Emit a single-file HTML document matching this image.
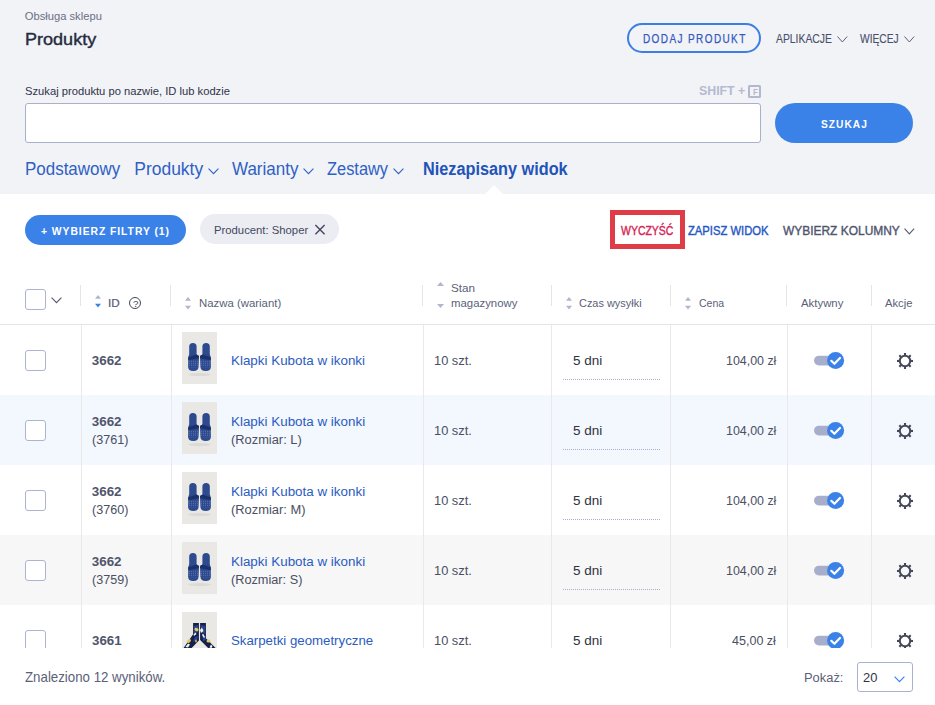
<!DOCTYPE html>
<html><head><meta charset="utf-8"><style>
html,body{margin:0;padding:0;}
body{width:935px;height:705px;overflow:hidden;position:relative;background:#fff;font-family:"Liberation Sans",sans-serif;}
.a{position:absolute;box-sizing:content-box;}
.t{position:absolute;white-space:nowrap;line-height:1;transform-origin:0 0;}
svg.a{overflow:visible}
</style></head><body>
<div class="a" style="left:0;top:0;width:935px;height:194px;background:#f1f3f7"></div>
<div class="a" style="left:485px;top:185px;width:0;height:0;border-left:9px solid transparent;border-right:9px solid transparent;border-bottom:9px solid #fff"></div>
<div class="t" style="left:24.76px;top:11.43px;font-size:11.19px;color:#6b6f85;">Obsługa sklepu</div>
<div class="t" style="left:24.66px;top:31.26px;font-size:17.30px;color:#262b3d;transform:scaleX(1.0443);-webkit-text-stroke:0.4px currentColor;">Produkty</div>
<div class="a" style="left:627px;top:23px;width:130px;height:26px;border:2px solid #3b7ee4;border-radius:15px"></div>
<div class="t" style="left:642.50px;top:33.91px;font-size:11.92px;color:#3358c0;letter-spacing:1.669px;transform:scaleX(0.8390);-webkit-text-stroke:0.25px currentColor;">DODAJ PRODUKT</div>
<div class="t" style="left:775.97px;top:33.91px;font-size:11.92px;color:#4a4f6a;transform:scaleX(0.8720);-webkit-text-stroke:0.12px currentColor;">APLIKACJE</div>
<svg class="a" style="left:837.30px;top:35.50px" width="10.70" height="6.50" viewBox="0 0 10.70 6.50"><polyline points="0.50,0.50 5.35,6.00 10.20,0.50" fill="none" stroke="#5a5f78" stroke-width="1.0"/></svg>
<div class="t" style="left:859.59px;top:33.91px;font-size:11.92px;color:#4a4f6a;transform:scaleX(0.8594);-webkit-text-stroke:0.12px currentColor;">WIĘCEJ</div>
<svg class="a" style="left:904.00px;top:35.50px" width="10.70" height="6.50" viewBox="0 0 10.70 6.50"><polyline points="0.50,0.50 5.35,6.00 10.20,0.50" fill="none" stroke="#5a5f78" stroke-width="1.0"/></svg>
<div class="t" style="left:24.53px;top:86.00px;font-size:11.34px;color:#30344a;transform:scaleX(0.9892);">Szukaj produktu po nazwie, ID lub kodzie</div>
<div class="t" style="left:698.81px;top:84.43px;font-size:13.08px;color:#b5bacf;font-weight:700;transform:scaleX(0.9431);">SHIFT +</div>
<div class="a" style="left:747.9px;top:85px;width:9.4px;height:8.7px;border:2px solid #b3b8cf;border-radius:1.5px"></div>
<div class="t" style="left:753.26px;top:88.51px;font-size:8.14px;color:#b3b8cf;font-weight:700;transform:scaleX(0.9877);">F</div>
<div class="a" style="left:25px;top:103px;width:734px;height:38px;border:1px solid #a9b0cc;border-radius:3px;background:#fff"></div>
<div class="a" style="left:775px;top:103px;width:138px;height:40px;border-radius:20px;background:#3b82e8"></div>
<div class="t" style="left:820.50px;top:119.20px;font-size:11.34px;color:#ffffff;font-weight:700;letter-spacing:1.134px;transform:scaleX(0.9001);">SZUKAJ</div>
<div class="t" style="left:24.53px;top:161.14px;font-size:17.44px;color:#2f60c4;transform:scaleX(0.9725);">Podstawowy</div>
<div class="t" style="left:134.30px;top:161.14px;font-size:17.44px;color:#2f60c4;">Produkty</div>
<svg class="a" style="left:208.00px;top:167.80px" width="11.00" height="6.20" viewBox="0 0 11.00 6.20"><polyline points="0.55,0.55 5.50,5.65 10.45,0.55" fill="none" stroke="#2f60c4" stroke-width="1.1"/></svg>
<div class="t" style="left:231.72px;top:161.14px;font-size:17.44px;color:#2f60c4;transform:scaleX(0.9751);">Warianty</div>
<svg class="a" style="left:303.00px;top:167.80px" width="11.00" height="6.20" viewBox="0 0 11.00 6.20"><polyline points="0.55,0.55 5.50,5.65 10.45,0.55" fill="none" stroke="#2f60c4" stroke-width="1.1"/></svg>
<div class="t" style="left:326.51px;top:161.14px;font-size:17.44px;color:#2f60c4;transform:scaleX(0.9400);">Zestawy</div>
<svg class="a" style="left:393.00px;top:167.80px" width="11.00" height="6.20" viewBox="0 0 11.00 6.20"><polyline points="0.55,0.55 5.50,5.65 10.45,0.55" fill="none" stroke="#2f60c4" stroke-width="1.1"/></svg>
<div class="t" style="left:422.68px;top:161.14px;font-size:17.44px;color:#2353b8;font-weight:700;transform:scaleX(0.9328);">Niezapisany widok</div>
<div class="a" style="left:25px;top:215px;width:161px;height:30px;border-radius:15px;background:#3b82e8"></div>
<div class="t" style="left:40.74px;top:226.18px;font-size:11.48px;color:#ffffff;font-weight:700;letter-spacing:1.033px;transform:scaleX(0.9047);">+ WYBIERZ FILTRY (1)</div>
<div class="a" style="left:200px;top:214px;width:139px;height:30px;border-radius:15px;background:#ebedf3"></div>
<div class="t" style="left:213.52px;top:225.33px;font-size:11.19px;color:#43485e;transform:scaleX(1.0094);">Producent: Shoper</div>
<svg class="a" style="left:314px;top:224px" width="12" height="11" viewBox="0 0 12 11"><path d="M1.4 1L10.6 10.2M10.6 1L1.4 10.2" stroke="#43485e" stroke-width="1.4"/></svg>
<div class="a" style="left:610px;top:210px;width:65px;height:29px;border:5px solid #de3d47"></div>
<div class="t" style="left:620.68px;top:224.95px;font-size:12.94px;color:#d42453;-webkit-text-stroke:0.4px currentColor;transform:scaleX(0.8104);">WYCZYŚĆ</div>
<div class="t" style="left:687.50px;top:223.73px;font-size:13.08px;color:#2357c4;-webkit-text-stroke:0.4px currentColor;transform:scaleX(0.8600);">ZAPISZ WIDOK</div>
<div class="t" style="left:782.55px;top:223.73px;font-size:13.08px;color:#505570;-webkit-text-stroke:0.4px currentColor;transform:scaleX(0.9134);">WYBIERZ KOLUMNY</div>
<svg class="a" style="left:904.00px;top:227.60px" width="10.70" height="6.40" viewBox="0 0 10.70 6.40"><polyline points="0.55,0.55 5.35,5.85 10.15,0.55" fill="none" stroke="#565b73" stroke-width="1.1"/></svg>
<div class="a" style="left:25px;top:289px;width:19px;height:19px;border:1px solid #adb4cf;border-radius:3px;background:#fff"></div>
<svg class="a" style="left:51.00px;top:296.50px" width="11.00" height="6.30" viewBox="0 0 11.00 6.30"><polyline points="0.57,0.57 5.50,5.73 10.43,0.57" fill="none" stroke="#565b73" stroke-width="1.15"/></svg>
<div class="a" style="left:80px;top:285px;width:1px;height:21px;background:#e4e5e9"></div>
<div class="a" style="left:170px;top:285px;width:1px;height:21px;background:#e4e5e9"></div>
<div class="a" style="left:422px;top:285px;width:1px;height:21px;background:#e4e5e9"></div>
<div class="a" style="left:551px;top:285px;width:1px;height:21px;background:#e4e5e9"></div>
<div class="a" style="left:670px;top:285px;width:1px;height:21px;background:#e4e5e9"></div>
<div class="a" style="left:786px;top:285px;width:1px;height:21px;background:#e4e5e9"></div>
<div class="a" style="left:871px;top:285px;width:1px;height:21px;background:#e4e5e9"></div>
<svg class="a" style="left:95px;top:295.1px" width="6" height="13" viewBox="0 0 6 13"><path d="M0 3.7L3 0L6 3.7Z" fill="#b0b6cf"/><path d="M0 8.8L3 12.6L6 8.8Z" fill="#3b82e8"/></svg>
<div class="t" style="left:108.00px;top:298.20px;font-size:11.34px;color:#585d76;transform:scaleX(1.0341);-webkit-text-stroke:0.2px currentColor;">ID</div>
<div class="a" style="left:129.1px;top:296.7px;width:10.4px;height:10.4px;border:1.4px solid #444859;border-radius:50%"></div>
<div class="t" style="left:133.02px;top:300.13px;font-size:9.30px;color:#444859;transform:scaleX(1.0526);">?</div>
<svg class="a" style="left:185px;top:297.2px" width="6" height="13" viewBox="0 0 6 13"><path d="M0 3.7L3 0L6 3.7Z" fill="#b0b6cf"/><path d="M0 8.8L3 12.6L6 8.8Z" fill="#b0b6cf"/></svg>
<div class="t" style="left:198.55px;top:298.20px;font-size:11.34px;color:#5a5f7a;transform:scaleX(1.0041);">Nazwa (wariant)</div>
<svg class="a" style="left:436.5px;top:282px" width="7" height="4" viewBox="0 0 7 4"><path d="M0 4L3.5 0L7 4Z" fill="#b0b6cf"/></svg>
<svg class="a" style="left:436.5px;top:304px" width="7" height="4" viewBox="0 0 7 4"><path d="M0 0L3.5 4L7 0Z" fill="#b0b6cf"/></svg>
<div class="t" style="left:450.65px;top:282.16px;font-size:11.63px;color:#5a5f7a;transform:scaleX(1.0063);">Stan</div>
<div class="t" style="left:450.69px;top:298.20px;font-size:11.34px;color:#5a5f7a;transform:scaleX(1.0043);">magazynowy</div>
<svg class="a" style="left:566px;top:297.2px" width="6" height="13" viewBox="0 0 6 13"><path d="M0 3.7L3 0L6 3.7Z" fill="#b0b6cf"/><path d="M0 8.8L3 12.6L6 8.8Z" fill="#b0b6cf"/></svg>
<div class="t" style="left:579.12px;top:298.20px;font-size:11.34px;color:#5a5f7a;transform:scaleX(0.9654);">Czas wysyłki</div>
<svg class="a" style="left:685px;top:297.2px" width="6" height="13" viewBox="0 0 6 13"><path d="M0 3.7L3 0L6 3.7Z" fill="#b0b6cf"/><path d="M0 8.8L3 12.6L6 8.8Z" fill="#b0b6cf"/></svg>
<div class="t" style="left:698.60px;top:298.20px;font-size:11.34px;color:#5a5f7a;transform:scaleX(0.9311);">Cena</div>
<div class="t" style="left:800.60px;top:298.20px;font-size:11.34px;color:#5a5f7a;transform:scaleX(1.0053);">Aktywny</div>
<div class="t" style="left:884.53px;top:298.20px;font-size:11.34px;color:#5a5f7a;transform:scaleX(0.9886);">Akcje</div>
<div class="a" style="left:0;top:324px;width:935px;height:1px;background:#e4e5e9"></div>
<div class="a" id="tbody" style="left:0;top:325px;width:935px;height:323px;overflow:hidden">
<div class="a" style="left:0;top:0px;width:935px;height:70px;background:#ffffff"></div>
<div class="a" style="left:25px;top:25px;width:19px;height:19px;border:1px solid #adb4cf;border-radius:3px;background:#fff"></div>
<div class="t" style="left:91.78px;top:28.68px;font-size:13.37px;color:#50556b;font-weight:700;">3662</div>
<svg class="a" style="left:182px;top:7px" width="35" height="52" viewBox="0 0 35 52"><rect width="35" height="52" fill="#eae8e5"/><ellipse cx="17.5" cy="42.6" rx="11.5" ry="1.6" fill="#dcdad7"/><path d="M7.2 14.6 Q7.2 10.9 10.9 10.9 Q14.6 10.9 14.6 14.6 L14.6 22.6 L17 24 L16.6 34.8 Q16.4 39 11.3 39 Q6.1 39 6.1 34.8 L6.3 25 L7.2 22.2 Z" fill="#2d4a8f"/><path d="M6.2 25.2 L14.6 22.6 L17 24 L16.9 26.3 L6.2 28.2Z" fill="#1b316c"/><path d="M7.2 29.3h8.8M7.2 31.3h8.8M7.2 33.3h8.8" stroke="#7d93c6" stroke-width="0.8" stroke-dasharray="0.8 1.2" opacity="0.9"/><path d="M7.4 35.3h8.4" stroke="#6f87c2" stroke-width="0.6" stroke-dasharray="0.8 1.2" opacity="0.6"/><g transform="translate(35 0) scale(-1 1)"><path d="M7.2 14.6 Q7.2 10.9 10.9 10.9 Q14.6 10.9 14.6 14.6 L14.6 22.6 L17 24 L16.6 34.8 Q16.4 39 11.3 39 Q6.1 39 6.1 34.8 L6.3 25 L7.2 22.2 Z" fill="#2d4a8f"/><path d="M6.2 25.2 L14.6 22.6 L17 24 L16.9 26.3 L6.2 28.2Z" fill="#1b316c"/><path d="M7.2 29.3h8.8M7.2 31.3h8.8M7.2 33.3h8.8" stroke="#7d93c6" stroke-width="0.8" stroke-dasharray="0.8 1.2" opacity="0.9"/><path d="M7.4 35.3h8.4" stroke="#6f87c2" stroke-width="0.6" stroke-dasharray="0.8 1.2" opacity="0.6"/></g></svg>
<div class="t" style="left:230.52px;top:28.68px;font-size:13.37px;color:#2b5cc0;transform:scaleX(1.0027);">Klapki Kubota w ikonki</div>
<div class="t" style="left:433.74px;top:28.68px;font-size:13.37px;color:#4a4f63;transform:scaleX(0.9603);">10 szt.</div>
<div class="t" style="left:572.72px;top:28.80px;font-size:13.23px;color:#2f3340;transform:scaleX(1.0190);">5 dni</div>
<div class="a" style="left:563px;top:54px;width:97px;height:0;border-top:1px dotted #a9b0cc"></div>
<div class="t" style="left:725.75px;top:28.66px;font-size:13.52px;color:#4a4f63;transform:scaleX(0.9182);">104,00 zł</div>
<svg class="a" style="left:814px;top:27px" width="32" height="18" viewBox="0 0 32 18"><rect x="0" y="3.8" width="22" height="9.6" rx="4.8" fill="#a6aecb"/><circle cx="21.6" cy="8.6" r="8.5" fill="#3b82e8"/><path d="M17.3 8.8 L20.4 11.8 L26 6" fill="none" stroke="#fff" stroke-width="2.2" stroke-linecap="round" stroke-linejoin="round"/></svg>
<svg class="a" style="left:896px;top:27px" width="18" height="18" viewBox="-9 -9 18 18"><rect x="-1.05" y="-8" width="2.1" height="3" fill="#444859" transform="rotate(0)"/><rect x="-1.05" y="-8" width="2.1" height="3" fill="#444859" transform="rotate(45)"/><rect x="-1.05" y="-8" width="2.1" height="3" fill="#444859" transform="rotate(90)"/><rect x="-1.05" y="-8" width="2.1" height="3" fill="#444859" transform="rotate(135)"/><rect x="-1.05" y="-8" width="2.1" height="3" fill="#444859" transform="rotate(180)"/><rect x="-1.05" y="-8" width="2.1" height="3" fill="#444859" transform="rotate(225)"/><rect x="-1.05" y="-8" width="2.1" height="3" fill="#444859" transform="rotate(270)"/><rect x="-1.05" y="-8" width="2.1" height="3" fill="#444859" transform="rotate(315)"/><circle r="5.2" fill="none" stroke="#444859" stroke-width="2"/></svg>
<div class="a" style="left:0;top:70px;width:935px;height:70px;background:#f3f7fe"></div>
<div class="a" style="left:0;top:70px;width:935px;height:0px;"></div>
<div class="a" style="left:25px;top:95px;width:19px;height:19px;border:1px solid #adb4cf;border-radius:3px;background:#fff"></div>
<div class="t" style="left:91.78px;top:89.68px;font-size:13.37px;color:#50556b;font-weight:700;">3662</div>
<div class="t" style="left:91.62px;top:107.90px;font-size:13.23px;color:#4a4f63;transform:scaleX(0.9526);">(3761)</div>
<svg class="a" style="left:182px;top:77px" width="35" height="52" viewBox="0 0 35 52"><rect width="35" height="52" fill="#eae8e5"/><ellipse cx="17.5" cy="42.6" rx="11.5" ry="1.6" fill="#dcdad7"/><path d="M7.2 14.6 Q7.2 10.9 10.9 10.9 Q14.6 10.9 14.6 14.6 L14.6 22.6 L17 24 L16.6 34.8 Q16.4 39 11.3 39 Q6.1 39 6.1 34.8 L6.3 25 L7.2 22.2 Z" fill="#2d4a8f"/><path d="M6.2 25.2 L14.6 22.6 L17 24 L16.9 26.3 L6.2 28.2Z" fill="#1b316c"/><path d="M7.2 29.3h8.8M7.2 31.3h8.8M7.2 33.3h8.8" stroke="#7d93c6" stroke-width="0.8" stroke-dasharray="0.8 1.2" opacity="0.9"/><path d="M7.4 35.3h8.4" stroke="#6f87c2" stroke-width="0.6" stroke-dasharray="0.8 1.2" opacity="0.6"/><g transform="translate(35 0) scale(-1 1)"><path d="M7.2 14.6 Q7.2 10.9 10.9 10.9 Q14.6 10.9 14.6 14.6 L14.6 22.6 L17 24 L16.6 34.8 Q16.4 39 11.3 39 Q6.1 39 6.1 34.8 L6.3 25 L7.2 22.2 Z" fill="#2d4a8f"/><path d="M6.2 25.2 L14.6 22.6 L17 24 L16.9 26.3 L6.2 28.2Z" fill="#1b316c"/><path d="M7.2 29.3h8.8M7.2 31.3h8.8M7.2 33.3h8.8" stroke="#7d93c6" stroke-width="0.8" stroke-dasharray="0.8 1.2" opacity="0.9"/><path d="M7.4 35.3h8.4" stroke="#6f87c2" stroke-width="0.6" stroke-dasharray="0.8 1.2" opacity="0.6"/></g></svg>
<div class="t" style="left:230.80px;top:89.93px;font-size:13.08px;color:#2b5cc0;transform:scaleX(1.0249);">Klapki Kubota w ikonki</div>
<div class="t" style="left:230.63px;top:107.90px;font-size:13.23px;color:#4a4f63;transform:scaleX(0.9725);">(Rozmiar: L)</div>
<div class="t" style="left:433.74px;top:98.68px;font-size:13.37px;color:#4a4f63;transform:scaleX(0.9603);">10 szt.</div>
<div class="t" style="left:572.72px;top:98.80px;font-size:13.23px;color:#2f3340;transform:scaleX(1.0190);">5 dni</div>
<div class="a" style="left:563px;top:124px;width:97px;height:0;border-top:1px dotted #a9b0cc"></div>
<div class="t" style="left:725.75px;top:98.66px;font-size:13.52px;color:#4a4f63;transform:scaleX(0.9182);">104,00 zł</div>
<svg class="a" style="left:814px;top:97px" width="32" height="18" viewBox="0 0 32 18"><rect x="0" y="3.8" width="22" height="9.6" rx="4.8" fill="#a6aecb"/><circle cx="21.6" cy="8.6" r="8.5" fill="#3b82e8"/><path d="M17.3 8.8 L20.4 11.8 L26 6" fill="none" stroke="#fff" stroke-width="2.2" stroke-linecap="round" stroke-linejoin="round"/></svg>
<svg class="a" style="left:896px;top:97px" width="18" height="18" viewBox="-9 -9 18 18"><rect x="-1.05" y="-8" width="2.1" height="3" fill="#444859" transform="rotate(0)"/><rect x="-1.05" y="-8" width="2.1" height="3" fill="#444859" transform="rotate(45)"/><rect x="-1.05" y="-8" width="2.1" height="3" fill="#444859" transform="rotate(90)"/><rect x="-1.05" y="-8" width="2.1" height="3" fill="#444859" transform="rotate(135)"/><rect x="-1.05" y="-8" width="2.1" height="3" fill="#444859" transform="rotate(180)"/><rect x="-1.05" y="-8" width="2.1" height="3" fill="#444859" transform="rotate(225)"/><rect x="-1.05" y="-8" width="2.1" height="3" fill="#444859" transform="rotate(270)"/><rect x="-1.05" y="-8" width="2.1" height="3" fill="#444859" transform="rotate(315)"/><circle r="5.2" fill="none" stroke="#444859" stroke-width="2"/></svg>
<div class="a" style="left:0;top:140px;width:935px;height:70px;background:#ffffff"></div>
<div class="a" style="left:0;top:140px;width:935px;height:0px;"></div>
<div class="a" style="left:25px;top:165px;width:19px;height:19px;border:1px solid #adb4cf;border-radius:3px;background:#fff"></div>
<div class="t" style="left:91.78px;top:159.68px;font-size:13.37px;color:#50556b;font-weight:700;">3662</div>
<div class="t" style="left:91.62px;top:177.90px;font-size:13.23px;color:#4a4f63;transform:scaleX(0.9526);">(3760)</div>
<svg class="a" style="left:182px;top:147px" width="35" height="52" viewBox="0 0 35 52"><rect width="35" height="52" fill="#eae8e5"/><ellipse cx="17.5" cy="42.6" rx="11.5" ry="1.6" fill="#dcdad7"/><path d="M7.2 14.6 Q7.2 10.9 10.9 10.9 Q14.6 10.9 14.6 14.6 L14.6 22.6 L17 24 L16.6 34.8 Q16.4 39 11.3 39 Q6.1 39 6.1 34.8 L6.3 25 L7.2 22.2 Z" fill="#2d4a8f"/><path d="M6.2 25.2 L14.6 22.6 L17 24 L16.9 26.3 L6.2 28.2Z" fill="#1b316c"/><path d="M7.2 29.3h8.8M7.2 31.3h8.8M7.2 33.3h8.8" stroke="#7d93c6" stroke-width="0.8" stroke-dasharray="0.8 1.2" opacity="0.9"/><path d="M7.4 35.3h8.4" stroke="#6f87c2" stroke-width="0.6" stroke-dasharray="0.8 1.2" opacity="0.6"/><g transform="translate(35 0) scale(-1 1)"><path d="M7.2 14.6 Q7.2 10.9 10.9 10.9 Q14.6 10.9 14.6 14.6 L14.6 22.6 L17 24 L16.6 34.8 Q16.4 39 11.3 39 Q6.1 39 6.1 34.8 L6.3 25 L7.2 22.2 Z" fill="#2d4a8f"/><path d="M6.2 25.2 L14.6 22.6 L17 24 L16.9 26.3 L6.2 28.2Z" fill="#1b316c"/><path d="M7.2 29.3h8.8M7.2 31.3h8.8M7.2 33.3h8.8" stroke="#7d93c6" stroke-width="0.8" stroke-dasharray="0.8 1.2" opacity="0.9"/><path d="M7.4 35.3h8.4" stroke="#6f87c2" stroke-width="0.6" stroke-dasharray="0.8 1.2" opacity="0.6"/></g></svg>
<div class="t" style="left:230.80px;top:159.93px;font-size:13.08px;color:#2b5cc0;transform:scaleX(1.0249);">Klapki Kubota w ikonki</div>
<div class="t" style="left:230.63px;top:177.90px;font-size:13.23px;color:#4a4f63;transform:scaleX(0.9755);">(Rozmiar: M)</div>
<div class="t" style="left:433.74px;top:168.68px;font-size:13.37px;color:#4a4f63;transform:scaleX(0.9603);">10 szt.</div>
<div class="t" style="left:572.72px;top:168.80px;font-size:13.23px;color:#2f3340;transform:scaleX(1.0190);">5 dni</div>
<div class="a" style="left:563px;top:194px;width:97px;height:0;border-top:1px dotted #a9b0cc"></div>
<div class="t" style="left:725.75px;top:168.66px;font-size:13.52px;color:#4a4f63;transform:scaleX(0.9182);">104,00 zł</div>
<svg class="a" style="left:814px;top:167px" width="32" height="18" viewBox="0 0 32 18"><rect x="0" y="3.8" width="22" height="9.6" rx="4.8" fill="#a6aecb"/><circle cx="21.6" cy="8.6" r="8.5" fill="#3b82e8"/><path d="M17.3 8.8 L20.4 11.8 L26 6" fill="none" stroke="#fff" stroke-width="2.2" stroke-linecap="round" stroke-linejoin="round"/></svg>
<svg class="a" style="left:896px;top:167px" width="18" height="18" viewBox="-9 -9 18 18"><rect x="-1.05" y="-8" width="2.1" height="3" fill="#444859" transform="rotate(0)"/><rect x="-1.05" y="-8" width="2.1" height="3" fill="#444859" transform="rotate(45)"/><rect x="-1.05" y="-8" width="2.1" height="3" fill="#444859" transform="rotate(90)"/><rect x="-1.05" y="-8" width="2.1" height="3" fill="#444859" transform="rotate(135)"/><rect x="-1.05" y="-8" width="2.1" height="3" fill="#444859" transform="rotate(180)"/><rect x="-1.05" y="-8" width="2.1" height="3" fill="#444859" transform="rotate(225)"/><rect x="-1.05" y="-8" width="2.1" height="3" fill="#444859" transform="rotate(270)"/><rect x="-1.05" y="-8" width="2.1" height="3" fill="#444859" transform="rotate(315)"/><circle r="5.2" fill="none" stroke="#444859" stroke-width="2"/></svg>
<div class="a" style="left:0;top:210px;width:935px;height:70px;background:#f7f7f7"></div>
<div class="a" style="left:0;top:210px;width:935px;height:0px;"></div>
<div class="a" style="left:25px;top:235px;width:19px;height:19px;border:1px solid #adb4cf;border-radius:3px;background:#fff"></div>
<div class="t" style="left:91.78px;top:229.68px;font-size:13.37px;color:#50556b;font-weight:700;">3662</div>
<div class="t" style="left:91.62px;top:247.90px;font-size:13.23px;color:#4a4f63;transform:scaleX(0.9526);">(3759)</div>
<svg class="a" style="left:182px;top:217px" width="35" height="52" viewBox="0 0 35 52"><rect width="35" height="52" fill="#eae8e5"/><ellipse cx="17.5" cy="42.6" rx="11.5" ry="1.6" fill="#dcdad7"/><path d="M7.2 14.6 Q7.2 10.9 10.9 10.9 Q14.6 10.9 14.6 14.6 L14.6 22.6 L17 24 L16.6 34.8 Q16.4 39 11.3 39 Q6.1 39 6.1 34.8 L6.3 25 L7.2 22.2 Z" fill="#2d4a8f"/><path d="M6.2 25.2 L14.6 22.6 L17 24 L16.9 26.3 L6.2 28.2Z" fill="#1b316c"/><path d="M7.2 29.3h8.8M7.2 31.3h8.8M7.2 33.3h8.8" stroke="#7d93c6" stroke-width="0.8" stroke-dasharray="0.8 1.2" opacity="0.9"/><path d="M7.4 35.3h8.4" stroke="#6f87c2" stroke-width="0.6" stroke-dasharray="0.8 1.2" opacity="0.6"/><g transform="translate(35 0) scale(-1 1)"><path d="M7.2 14.6 Q7.2 10.9 10.9 10.9 Q14.6 10.9 14.6 14.6 L14.6 22.6 L17 24 L16.6 34.8 Q16.4 39 11.3 39 Q6.1 39 6.1 34.8 L6.3 25 L7.2 22.2 Z" fill="#2d4a8f"/><path d="M6.2 25.2 L14.6 22.6 L17 24 L16.9 26.3 L6.2 28.2Z" fill="#1b316c"/><path d="M7.2 29.3h8.8M7.2 31.3h8.8M7.2 33.3h8.8" stroke="#7d93c6" stroke-width="0.8" stroke-dasharray="0.8 1.2" opacity="0.9"/><path d="M7.4 35.3h8.4" stroke="#6f87c2" stroke-width="0.6" stroke-dasharray="0.8 1.2" opacity="0.6"/></g></svg>
<div class="t" style="left:230.80px;top:229.93px;font-size:13.08px;color:#2b5cc0;transform:scaleX(1.0249);">Klapki Kubota w ikonki</div>
<div class="t" style="left:230.64px;top:247.90px;font-size:13.23px;color:#4a4f63;transform:scaleX(0.9626);">(Rozmiar: S)</div>
<div class="t" style="left:433.74px;top:238.68px;font-size:13.37px;color:#4a4f63;transform:scaleX(0.9603);">10 szt.</div>
<div class="t" style="left:572.72px;top:238.80px;font-size:13.23px;color:#2f3340;transform:scaleX(1.0190);">5 dni</div>
<div class="a" style="left:563px;top:264px;width:97px;height:0;border-top:1px dotted #a9b0cc"></div>
<div class="t" style="left:725.75px;top:238.66px;font-size:13.52px;color:#4a4f63;transform:scaleX(0.9182);">104,00 zł</div>
<svg class="a" style="left:814px;top:237px" width="32" height="18" viewBox="0 0 32 18"><rect x="0" y="3.8" width="22" height="9.6" rx="4.8" fill="#a6aecb"/><circle cx="21.6" cy="8.6" r="8.5" fill="#3b82e8"/><path d="M17.3 8.8 L20.4 11.8 L26 6" fill="none" stroke="#fff" stroke-width="2.2" stroke-linecap="round" stroke-linejoin="round"/></svg>
<svg class="a" style="left:896px;top:237px" width="18" height="18" viewBox="-9 -9 18 18"><rect x="-1.05" y="-8" width="2.1" height="3" fill="#444859" transform="rotate(0)"/><rect x="-1.05" y="-8" width="2.1" height="3" fill="#444859" transform="rotate(45)"/><rect x="-1.05" y="-8" width="2.1" height="3" fill="#444859" transform="rotate(90)"/><rect x="-1.05" y="-8" width="2.1" height="3" fill="#444859" transform="rotate(135)"/><rect x="-1.05" y="-8" width="2.1" height="3" fill="#444859" transform="rotate(180)"/><rect x="-1.05" y="-8" width="2.1" height="3" fill="#444859" transform="rotate(225)"/><rect x="-1.05" y="-8" width="2.1" height="3" fill="#444859" transform="rotate(270)"/><rect x="-1.05" y="-8" width="2.1" height="3" fill="#444859" transform="rotate(315)"/><circle r="5.2" fill="none" stroke="#444859" stroke-width="2"/></svg>
<div class="a" style="left:0;top:280px;width:935px;height:70px;background:#ffffff"></div>
<div class="a" style="left:0;top:280px;width:935px;height:0px;"></div>
<div class="a" style="left:25px;top:305px;width:19px;height:19px;border:1px solid #adb4cf;border-radius:3px;background:#fff"></div>
<div class="t" style="left:91.53px;top:308.68px;font-size:13.37px;color:#50556b;font-weight:700;transform:scaleX(0.9948);">3661</div>
<svg class="a" style="left:182px;top:287px" width="35" height="52" viewBox="0 0 35 52"><rect width="35" height="52" fill="#eae8e5"/><path d="M11.1 11 L16.9 11 L16.9 28.6 L9.7 36 L1.6 36 L11.1 22.3 Z" fill="#15204a"/><path d="M18.1 11 L23.9 11 L23.9 26.2 L33.6 36 L26.1 36 L18.1 28.1 Z" fill="#15204a"/><path d="M12 14 L16 13 L16 20 L12 22Z M19 13 L23 14 L23 22 L19 20Z M13 25 L16 24 L15 28 L11 30Z M20 22 L23 24 L24 28 L21 29Z" fill="#2d4c98" opacity="0.8"/><ellipse cx="14.5" cy="17.5" rx="2.2" ry="1.6" fill="#e3c955" transform="rotate(30 14.5 17.5)"/><ellipse cx="7" cy="29" rx="2.2" ry="1.5" fill="#e3c955" transform="rotate(-40 7 29)"/><ellipse cx="26.5" cy="29" rx="2" ry="1.6" fill="#e3c955"/><ellipse cx="14" cy="29" rx="0.8" ry="1.6" fill="#e3c955"/><path d="M18 18 L20 15.5 L21.5 19 L19 21Z" fill="#f3f3f3"/><path d="M11.5 22.5 L13.5 20.5 L14.5 22 L12 24Z" fill="#f3f3f3"/><path d="M20 23 L21 21.5 L23 25 L22 26Z" fill="#f3f3f3"/><path d="M3.5 35 L6 31.5 L8 32.5 L6 35.5Z" fill="#f3f3f3"/><path d="M27.5 35.5 L29 32.5 L30.5 34 L29.5 36Z" fill="#f3f3f3"/></svg>
<div class="t" style="left:230.59px;top:308.68px;font-size:13.37px;color:#2b5cc0;transform:scaleX(0.9919);">Skarpetki geometryczne</div>
<div class="t" style="left:433.74px;top:308.68px;font-size:13.37px;color:#4a4f63;transform:scaleX(0.9603);">10 szt.</div>
<div class="t" style="left:572.72px;top:308.80px;font-size:13.23px;color:#2f3340;transform:scaleX(1.0190);">5 dni</div>
<div class="a" style="left:563px;top:334px;width:97px;height:0;border-top:1px dotted #a9b0cc"></div>
<div class="t" style="left:731.71px;top:308.66px;font-size:13.52px;color:#4a4f63;transform:scaleX(0.9269);">45,00 zł</div>
<svg class="a" style="left:814px;top:307px" width="32" height="18" viewBox="0 0 32 18"><rect x="0" y="3.8" width="22" height="9.6" rx="4.8" fill="#a6aecb"/><circle cx="21.6" cy="8.6" r="8.5" fill="#3b82e8"/><path d="M17.3 8.8 L20.4 11.8 L26 6" fill="none" stroke="#fff" stroke-width="2.2" stroke-linecap="round" stroke-linejoin="round"/></svg>
<svg class="a" style="left:896px;top:307px" width="18" height="18" viewBox="-9 -9 18 18"><rect x="-1.05" y="-8" width="2.1" height="3" fill="#444859" transform="rotate(0)"/><rect x="-1.05" y="-8" width="2.1" height="3" fill="#444859" transform="rotate(45)"/><rect x="-1.05" y="-8" width="2.1" height="3" fill="#444859" transform="rotate(90)"/><rect x="-1.05" y="-8" width="2.1" height="3" fill="#444859" transform="rotate(135)"/><rect x="-1.05" y="-8" width="2.1" height="3" fill="#444859" transform="rotate(180)"/><rect x="-1.05" y="-8" width="2.1" height="3" fill="#444859" transform="rotate(225)"/><rect x="-1.05" y="-8" width="2.1" height="3" fill="#444859" transform="rotate(270)"/><rect x="-1.05" y="-8" width="2.1" height="3" fill="#444859" transform="rotate(315)"/><circle r="5.2" fill="none" stroke="#444859" stroke-width="2"/></svg>
</div>
<div class="a" style="left:81px;top:325px;width:1px;height:323px;background:#e9e9ec"></div>
<div class="a" style="left:171px;top:325px;width:1px;height:323px;background:#e9e9ec"></div>
<div class="a" style="left:423px;top:325px;width:1px;height:323px;background:#e9e9ec"></div>
<div class="a" style="left:551px;top:325px;width:1px;height:323px;background:#e9e9ec"></div>
<div class="a" style="left:670px;top:325px;width:1px;height:323px;background:#e9e9ec"></div>
<div class="a" style="left:787px;top:325px;width:1px;height:323px;background:#e9e9ec"></div>
<div class="a" style="left:871px;top:325px;width:1px;height:323px;background:#e9e9ec"></div>
<div class="t" style="left:24.85px;top:670.37px;font-size:14.10px;color:#5b6078;transform:scaleX(0.9423);">Znaleziono 12 wyników.</div>
<div class="t" style="left:803.74px;top:671.33px;font-size:13.66px;color:#5b6078;transform:scaleX(0.9447);">Pokaż:</div>
<div class="a" style="left:857px;top:662px;width:54px;height:28px;border:1px solid #a9b1cf;border-radius:3px;background:#fff"></div>
<div class="t" style="left:862.65px;top:671.33px;font-size:13.66px;color:#30344a;transform:scaleX(0.9451);">20</div>
<svg class="a" style="left:894.00px;top:675.80px" width="11.00" height="6.20" viewBox="0 0 11.00 6.20"><polyline points="0.60,0.60 5.50,5.60 10.40,0.60" fill="none" stroke="#3b82e8" stroke-width="1.2"/></svg>
</body></html>
